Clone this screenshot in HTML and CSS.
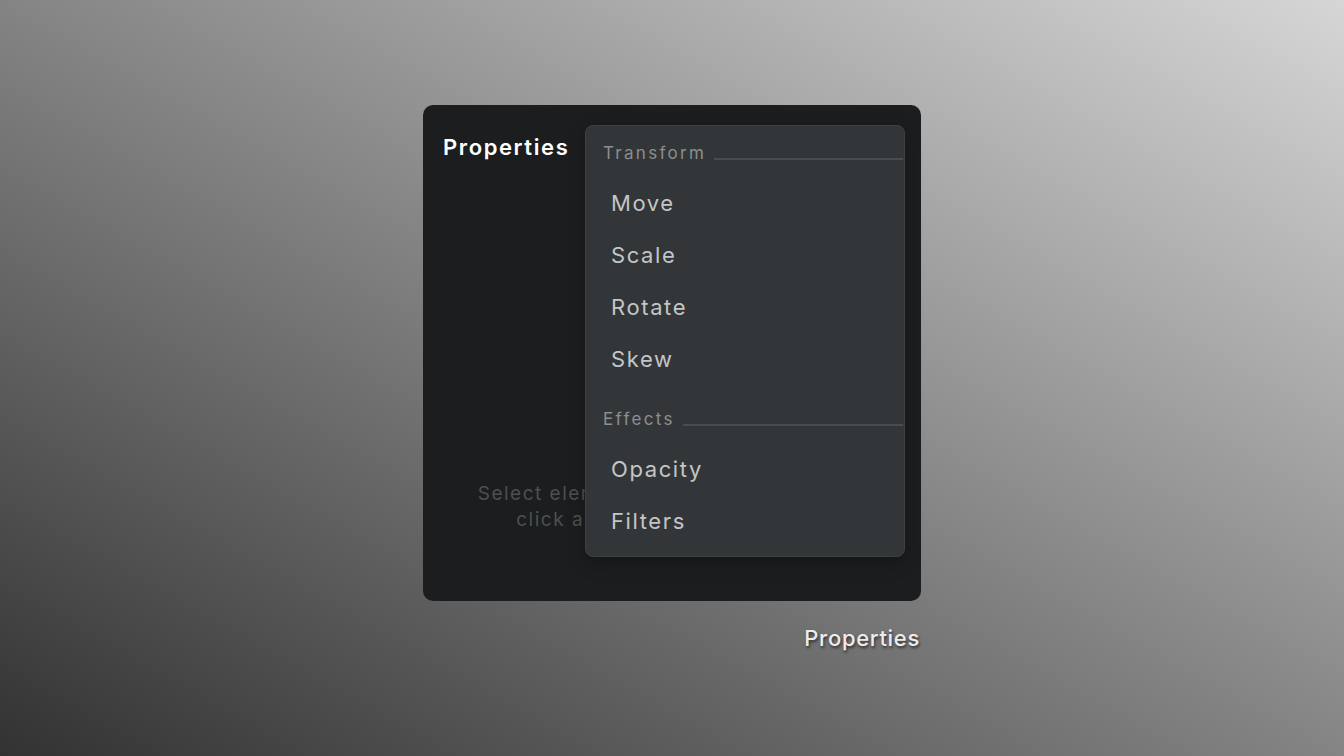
FILE: index.html
```html
<!DOCTYPE html>
<html lang="en">
<head>
    <meta charset="UTF-8">
    <meta name="viewport" content="width=device-width, initial-scale=1.0">
    <title>Properties</title>
    <link rel="stylesheet" href="styles.css">
</head>
<body>
    <div class="stage">
        <div class="panel">
            <h2 class="panel-title">Properties</h2>
            <p class="empty-hint">Select elements on the canvas to see<br>click an item to edit its values</p>

            <!-- context menu, opened over the panel -->
            <div class="menu">
                <div class="menu-group">Transform</div>
                <div class="menu-item">Move</div>
                <div class="menu-item">Scale</div>
                <div class="menu-item">Rotate</div>
                <div class="menu-item">Skew</div>
                <div class="menu-group second">Effects</div>
                <div class="menu-item">Opacity</div>
                <div class="menu-item">Filters</div>
            </div>
        </div>
        <div class="caption">Properties</div>
    </div>
</body>
</html>
```

FILE: styles.css
```css
/* General Reset */
* {
    margin: 0;
    padding: 0;
    box-sizing: border-box;
}

body {
    font-family: Inter, 'Noto Sans', sans-serif;
    background: linear-gradient(to top right, #323232, #d6d6d6);
    min-height: 100vh;
    display: flex;
    align-items: center;
    justify-content: center;
}

.stage {
    width: 498px;
    display: flex;
    flex-direction: column;
    align-items: flex-end;
    gap: 24px;
}

.panel {
    position: relative;
    width: 100%;
    height: 496px;
    background: #1b1d1e;
    border-radius: 10px;
    padding: 28px 20px 20px;
}

.panel-title {
    color: #ffffff;
    font-size: 22px;
    font-weight: 600;
    letter-spacing: 1.6px;
    line-height: 28px;
}

.empty-hint {
    margin-top: 320px;
    text-align: center;
    color: #4d5052;
    font-size: 19px;
    line-height: 26px;
    letter-spacing: 1.5px;
}

.menu {
    position: absolute;
    top: 20px;
    left: 162px;
    width: 320px;
    background: #333638;
    border: 1px solid #3e4143;
    border-radius: 8px;
    padding: 10px 0 9px;
    box-shadow: 0 6px 18px rgba(0, 0, 0, 0.25);
}

.menu-group {
    display: flex;
    align-items: center;
    height: 34px;
    margin-bottom: 7px;
    padding-left: 17px;
    padding-right: 1px;
    color: #8b8e90;
    font-size: 17px;
    letter-spacing: 2.3px;
}

.menu-group::after {
    content: '';
    flex: 1;
    height: 2px;
    margin-left: 8px;
    margin-top: 11px;
    background: #4a4d4f;
}

.menu-group.second {
    margin-top: 17px;
}

.menu-item {
    height: 52px;
    line-height: 52px;
    padding-left: 25px;
    color: #c3c5c6;
    font-size: 22px;
    letter-spacing: 1.6px;
}

.caption {
    color: #ececec;
    font-size: 22px;
    font-weight: 500;
    letter-spacing: 0.7px;
    line-height: 26px;
    text-shadow: 1px 2px 3px rgba(0, 0, 0, 0.6);
    margin-right: 1px;
}
```
